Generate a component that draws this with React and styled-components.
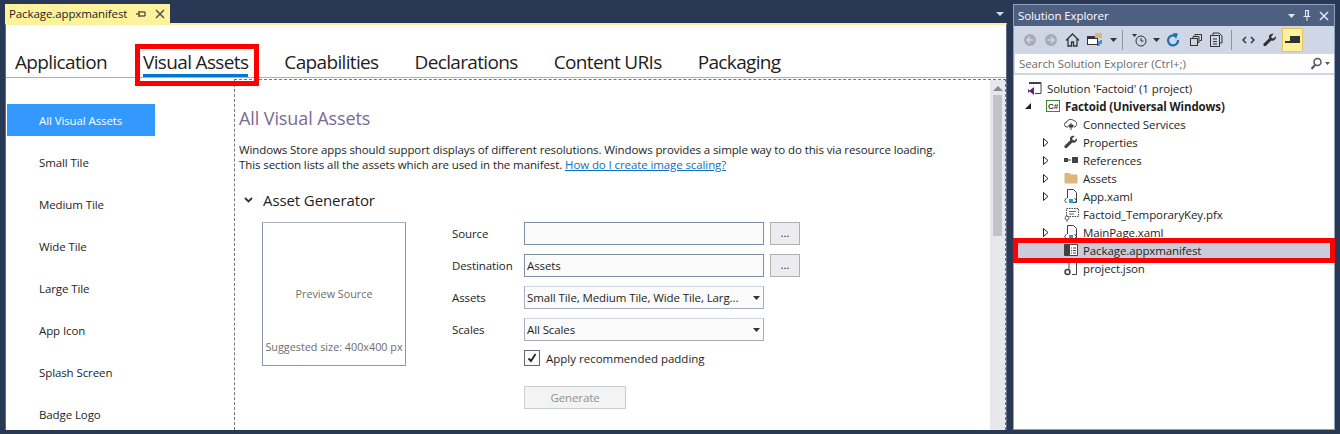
import React from "react";
import styled, { createGlobalStyle } from "styled-components";

const Global = createGlobalStyle`
  html, body { margin: 0; padding: 0; overflow: hidden; }
  * { box-sizing: border-box; }
  body { font-family: "Open Sans", "Noto Sans", sans-serif; font-size: 11.5px; letter-spacing: -0.1px; color: #1e1e1e; }
`;

const Page = styled.div`
  width: 1340px;
  height: 434px;
  background: #293955;
  display: flex;
  padding: 4px 5px 4px 5px;
  position: relative;
  overflow: hidden;
`;

const DocArea = styled.div`
  width: 1002px;
  display: flex;
  flex-direction: column;
`;

const DocTabStrip = styled.div`
  height: 19px;
  display: flex;
  justify-content: space-between;
  align-items: center;
`;

const DocTab = styled.div`
  width: 165px;
  height: 19px;
  background: #fff29d;
  display: flex;
  align-items: center;
  padding-left: 4px;
  color: #1e1e1e;
`;

const DocTabIcons = styled.div`
  margin-left: auto;
  margin-right: 5px;
  display: flex;
  align-items: center;
  gap: 9px;
`;

const StripArrow = styled.div`
  width: 0;
  height: 0;
  margin-right: 3px;
  border-left: 4px solid transparent;
  border-right: 4px solid transparent;
  border-top: 4px solid #cfd6e5;
`;

const Doc = styled.div`
  flex: 1;
  min-height: 0;
  background: #fff;
  border-top: 2px solid #fff29d;
  border-left: 1px solid #5d6b87;
  border-right: 1px solid #5d6b87;
  display: flex;
  flex-direction: column;
`;

const TabRow = styled.div`
  height: 53px;
  flex: none;
  display: flex;
  align-items: flex-start;
  padding: 25px 0 0 9px;
  gap: 36px;
  border-bottom: 1px solid #b0b0b0;
`;

const Tab = styled.div`
  font-size: 19px;
  line-height: 24px;
  color: #1e1e1e;
  letter-spacing: -0.65px;
  border-bottom: 3px solid ${(p) => (p.$active ? "#0078d7" : "transparent")};
`;

const Body = styled.div`
  flex: 1;
  min-height: 0;
  display: flex;
`;

const Nav = styled.div`
  width: 228px;
  flex: none;
  padding: 26px 0 0 1px;
  display: flex;
  flex-direction: column;
  gap: 10px;
`;

const NavItem = styled.div`
  width: 148px;
  height: 32px;
  flex: none;
  display: flex;
  align-items: center;
  padding-left: 32px;
  background: ${(p) => (p.$active ? "#3399ff" : "transparent")};
  color: ${(p) => (p.$active ? "#fff" : "#1e1e1e")};
`;

const Main = styled.div`
  flex: 1;
  min-width: 0;
  margin-top: 1px;
  border-top: 1px dashed #777;
  border-left: 1px dashed #777;
  border-right: 1px dashed #777;
  display: flex;
`;

const Content = styled.div`
  flex: 1;
  min-width: 0;
  padding: 26px 0 0 4px;
`;

const Heading = styled.div`
  font-size: 18px;
  line-height: 24px;
  color: #7a6a96;
`;

const Para = styled.p`
  margin: 12px 0 0;
  line-height: 15px;
  white-space: nowrap;
`;

const Link = styled.a`
  color: #0e70c0;
  text-decoration: underline;
`;

const SectionHead = styled.div`
  margin-top: 18px;
  display: flex;
  align-items: center;
  font-size: 15px;
  line-height: 20px;
  gap: 10px;
  padding-left: 5px;
`;

const Generator = styled.div`
  display: flex;
  margin: 12px 0 0 23px;
`;

const Preview = styled.div`
  width: 144px;
  height: 144px;
  flex: none;
  border: 1px solid #8a99ad;
  border-top-color: #a8b3c2;
  color: #6d6d6d;
  font-size: 10.8px;
  letter-spacing: 0;
  display: flex;
  flex-direction: column;
  align-items: center;
  padding-top: 63px;
`;

const PreviewHint = styled.div`
  margin-top: 38px;
  white-space: nowrap;
`;

const Form = styled.div`
  margin-left: 46px;
  display: grid;
  grid-template-columns: 72px 240px 36px;
  row-gap: 9px;
  grid-auto-rows: 23px;
`;

const Label = styled.div`
  display: flex;
  align-items: center;
`;

const Field = styled.div`
  border: 1px solid #7f8ea3;
  background: #fbfbfb;
  display: flex;
  align-items: center;
  justify-content: space-between;
  padding: 0 3px 0 2px;
  white-space: nowrap;
  ${(p) => p.$select && "border-color: #a3afbf; border-top-color: #ccd4de;"}
`;

const DotsButton = styled.div`
  margin-left: 6px;
  border: 1px solid #b0b0b0;
  background: #ececf0;
  display: flex;
  justify-content: center;
  align-items: center;
  color: #1e1e1e;
  padding-bottom: 2px;
`;

const CheckRow = styled.div`
  grid-column: 2 / 4;
  display: flex;
  align-items: center;
  gap: 6px;
  height: 16px;
  letter-spacing: 0;
`;

const CheckBox = styled.div`
  width: 16px;
  height: 16px;
  border: 1px solid #666;
  background: #fafafa;
  display: flex;
  align-items: center;
  justify-content: center;
`;

const GenerateButton = styled.div`
  grid-column: 2 / 3;
  width: 102px;
  height: 23px;
  margin-top: 4px;
  border: 1px solid #ccced6;
  background: #f3f3f3;
  color: #8f8f8f;
  display: flex;
  align-items: center;
  justify-content: center;
`;

const ScrollBar = styled.div`
  width: 15px;
  flex: none;
  background: #e8e8ec;
  display: flex;
  flex-direction: column;
  align-items: center;
  padding-top: 6px;
`;

const ScrollUp = styled.div`
  width: 0;
  height: 0;
  border-left: 5px solid transparent;
  border-right: 5px solid transparent;
  border-bottom: 5px solid #868999;
`;

const ScrollThumb = styled.div`
  width: 9px;
  height: 141px;
  margin-top: 4px;
  background: #c2c3c9;
`;

const Explorer = styled.div`
  margin-left: 6px;
  width: 322px;
  border: 1px solid #8fa0bd;
  display: flex;
  flex-direction: column;
  background: #fff;
`;

const TitleBar = styled.div`
  height: 21px;
  flex: none;
  background: #4d6082;
  color: #fff;
  display: flex;
  align-items: center;
  justify-content: space-between;
  padding: 0 5px 0 4px;
`;

const TitleIcons = styled.div`
  display: flex;
  align-items: center;
  gap: 7px;
`;

const Toolbar = styled.div`
  height: 27px;
  flex: none;
  background: #cfd6e5;
  display: flex;
  align-items: center;
  padding-left: 5px;
`;

const ToolIcon = styled.div`
  width: ${(p) => p.$w || 21}px;
  height: 24px;
  display: flex;
  align-items: center;
  justify-content: center;
  flex: none;
`;

const ToolSep = styled.div`
  width: 1px;
  height: 20px;
  background: #8c96a8;
  margin: 0 6px 0 3px;
  flex: none;
`;

const ToolActive = styled(ToolIcon)`
  background: #fff29d;
  border: 1px solid #e5c365;
  margin-left: 2px;
`;

const SearchWrap = styled.div`
  flex: none;
  background: #cfd6e5;
  padding: 1px 0 2px 1px;
`;

const Search = styled.div`
  height: 19px;
  background: #fff;
  color: #6d6d6d;
  display: flex;
  align-items: center;
  justify-content: space-between;
  padding: 0 4px;
`;

const Tree = styled.div`
  flex: 1;
  padding-top: 4px;
`;

const Row = styled.div`
  height: 18px;
  display: flex;
  align-items: center;
  padding-left: ${(p) => p.$indent}px;
  background: ${(p) => (p.$selected ? "#cacdd9" : "transparent")};
  font-weight: ${(p) => (p.$bold ? 700 : 400)};
  white-space: nowrap;
`;

const Expander = styled.div`
  width: 18px;
  flex: none;
  display: flex;
  align-items: center;
`;

const RowIcon = styled.div`
  width: 20px;
  height: 16px;
  flex: none;
  margin-right: 2px;
  display: flex;
  align-items: center;
  justify-content: center;
`;

// red callouts drawn on top of the screenshot
const Callout = styled.div`
  position: absolute;
  border: 5px solid #f00;
  pointer-events: none;
  left: ${(p) => p.$x}px;
  top: ${(p) => p.$y}px;
  width: ${(p) => p.$w}px;
  height: ${(p) => p.$h}px;
`;

const Svg = ({ w = 16, h = 16, children }) => (
  <svg width={w} height={h} viewBox={`0 0 ${w} ${h}`}>{children}</svg>
);

const Pin = ({ c = "#1e1e1e" }) => (
  <Svg w={10} h={10}>
    <path d="M0 5h3M3 2v6M3 3h6M3 7h6M9 3v4" stroke={c} fill="none" />
  </Svg>
);

const PinUp = ({ c = "#e6eaf2" }) => (
  <Svg w={10} h={11}>
    <path d="M3 .5h4M3.500 .5v5.500M6.500 .5v5.500M1.500 6.500h7M5 7v4" stroke={c} fill="none" />
    <rect x="5.500" y="1" width="1.500" height="5" fill={c} />
  </Svg>
);

const Close = ({ c = "#555" }) => (
  <Svg w={10} h={10}>
    <path d="M1 1l8 8M9 1l-8 8" stroke={c} strokeWidth="1.600" fill="none" />
  </Svg>
);

const Caret = ({ c = "#333" }) => (
  <Svg w={7} h={4}>
    <path d="M0 0h7L3.500 4z" fill={c} />
  </Svg>
);

const Round = ({ dir }) => (
  <Svg w={14} h={14}>
    <circle cx="7" cy="7" r="6" fill="#a6abb5" />
    <path d={dir === "l" ? "M10.500 7h-6M7 4L4 7l3 3" : "M3.500 7h6M7 4l3 3-3 3"} stroke="#cfd6e5" strokeWidth="1.600" fill="none" />
  </Svg>
);

const Wrench = ({ c = "#424242" }) => (
  <Svg w={14} h={14}>
    <path d="M13 3.200L10.400 5.600 8.600 5 8.200 3.400 10.600 1C8.500 .2 6 1.400 5.900 3.800c0 .6.1 1.100.3 1.500L.8 10.600c-.6.7-.6 1.600 0 2.200.6.6 1.500.6 2.200 0l5.300-5.300c2.600.9 5.300-1.400 4.700-4.300z" fill={c} />
  </Svg>
);

const FileIcon = ({ children }) => (
  <Svg w={14} h={16}>
    <path d="M3.500 1.500h6l3 3v10h-9z" fill="#fff" stroke="#424242" />
    {children}
  </Svg>
);

const Xaml = () => (
  <FileIcon>
    <rect x="3" y="10" width="6" height="5" fill="#fff" />
    <rect x="5" y="11" width="4" height="4" fill="#1ba1e2" />
    <path d="M2.500 10L.5 12.500 2.500 15M10.500 10l2 2.500-2 2.500" stroke="#424242" fill="none" />
  </FileIcon>
);

const tree = [
  { label: "Solution 'Factoid' (1 project)", indent: 11, icon: (
    <Svg w={14} h={14}>
      <path d="M2 1.500h11v11H7" stroke="#424242" fill="none" />
      <path d="M1 2h12" stroke="#424242" strokeWidth="2" />
      <path d="M0 8l1.500 1.500L6 6v8l-4.500-3.500L0 12z" fill="#68217a" />
    </Svg>
  ) },
  { label: "Factoid (Universal Windows)", indent: 11, bold: true, exp: "open", icon: (
    <Svg w={14} h={12}>
      <rect x="0.500" y="0.500" width="13" height="11" fill="#fff" stroke="#388a34" />
      <text x="7" y="9" fontSize="8" textAnchor="middle" fontFamily="Liberation Sans" fontWeight="700" fill="#333">C#</text>
    </Svg>
  ) },
  { label: "Connected Services", indent: 47, icon: (
    <Svg w={14} h={14}>
      <path d="M4 10H3a2.500 2.500 0 0 1 0-5c.5-3 5.500-3.500 7-1 2.500-.5 4 3.500 1 6h-1" stroke="#424242" fill="none" />
      <path d="M7 6v7M5 8h4v2H5z" stroke="#424242" fill="#424242" />
    </Svg>
  ) },
  { label: "Properties", indent: 29, exp: "shut", icon: <Wrench /> },
  { label: "References", indent: 29, exp: "shut", icon: (
    <Svg w={14} h={8}>
      <rect x="0" y="2" width="4" height="4" fill="#424242" />
      <path d="M4 4h3" stroke="#424242" />
      <rect x="8" y="1" width="6" height="6" fill="#424242" />
    </Svg>
  ) },
  { label: "Assets", indent: 29, exp: "shut", icon: (
    <Svg w={14} h={12}>
      <path d="M.5 1h5l1 1.500h7v9h-13z" fill="#dcb67a" />
    </Svg>
  ) },
  { label: "App.xaml", indent: 29, exp: "shut", icon: <Xaml /> },
  { label: "Factoid_TemporaryKey.pfx", indent: 47, icon: (
    <Svg w={15} h={15}>
      <rect x="2.500" y="1.500" width="12" height="8" fill="#fff" stroke="#424242" strokeDasharray="1.500 1" />
      <path d="M5 4.500h7M5 7h5" stroke="#666" />
      <circle cx="3" cy="11" r="2" fill="none" stroke="#666" />
      <path d="M3 13v2" stroke="#666" />
    </Svg>
  ) },
  { label: "MainPage.xaml", indent: 29, exp: "shut", icon: <Xaml /> },
  { label: "Package.appxmanifest", indent: 47, selected: true, icon: (
    <Svg w={14} h={14}>
      <path d="M.5 1.500h5v11h-5z" fill="#424242" stroke="#424242" />
      <path d="M5.500 1.500h8v11h-8z" fill="#fff" stroke="#424242" />
      <path d="M7 5h1M9 5h3M7 7.500h1M9 7.500h3M7 10h1M9 10h3" stroke="#424242" />
    </Svg>
  ) },
  { label: "project.json", indent: 47, icon: (
    <Svg w={14} h={16}>
      <path d="M5 1.500h6l1.500 1.500v11.500H8" fill="none" stroke="#424242" />
      <path d="M5 1.500v8" stroke="#424242" />
      <circle cx="3.500" cy="12" r="2.500" fill="none" stroke="#424242" strokeWidth="1.500" />
    </Svg>
  ) },
];

const navItems = ["All Visual Assets", "Small Tile", "Medium Tile", "Wide Tile", "Large Tile", "App Icon", "Splash Screen", "Badge Logo"];
const tabs = ["Application", "Visual Assets", "Capabilities", "Declarations", "Content URIs", "Packaging"];

export default function App() {
  return (
    <Page>
      <Global />
      <DocArea>
        <DocTabStrip>
          <DocTab>
            Package.appxmanifest
            <DocTabIcons><Pin /><Close /></DocTabIcons>
          </DocTab>
          <StripArrow />
        </DocTabStrip>
        <Doc>
          <TabRow>
            {tabs.map((t) => <Tab key={t} $active={t === "Visual Assets"}>{t}</Tab>)}
          </TabRow>
          <Body>
            <Nav>
              {navItems.map((n, i) => <NavItem key={n} $active={i === 0}>{n}</NavItem>)}
            </Nav>
            <Main>
              <Content>
                <Heading>All Visual Assets</Heading>
                <Para>
                  Windows Store apps should support displays of different resolutions. Windows provides a simple way to do this via resource loading.
                  <br />
                  This section lists all the assets which are used in the manifest. <Link>How do I create image scaling?</Link>
                </Para>
                <SectionHead>
                  <Svg w={9} h={6}><path d="M1 1l3.500 3.500L8 1" stroke="#333" strokeWidth="1.800" fill="none" /></Svg>
                  Asset Generator
                </SectionHead>
                <Generator>
                  <Preview>
                    Preview Source
                    <PreviewHint>Suggested size: 400x400 px</PreviewHint>
                  </Preview>
                  <Form>
                    <Label>Source</Label>
                    <Field />
                    <DotsButton>...</DotsButton>
                    <Label>Destination</Label>
                    <Field>Assets</Field>
                    <DotsButton>...</DotsButton>
                    <Label>Assets</Label>
                    <Field $select>Small Tile, Medium Tile, Wide Tile, Larg...<Caret /></Field>
                    <div />
                    <Label>Scales</Label>
                    <Field $select>All Scales<Caret /></Field>
                    <div />
                    <div />
                    <CheckRow>
                      <CheckBox>
                        <Svg w={10} h={10}><path d="M1.500 5.500l2.500 2.500 4.500-7" stroke="#222" strokeWidth="1.800" fill="none" /></Svg>
                      </CheckBox>
                      Apply recommended padding
                    </CheckRow>
                    <div />
                    <GenerateButton>Generate</GenerateButton>
                  </Form>
                </Generator>
              </Content>
              <ScrollBar>
                <ScrollUp />
                <ScrollThumb />
              </ScrollBar>
            </Main>
          </Body>
        </Doc>
      </DocArea>
      <Explorer>
        <TitleBar>
          Solution Explorer
          <TitleIcons>
            <Caret c="#dfe4ee" />
            <PinUp />
            <Close c="#dfe4ee" />
          </TitleIcons>
        </TitleBar>
        <Toolbar>
          <ToolIcon><Round dir="l" /></ToolIcon>
          <ToolIcon><Round dir="r" /></ToolIcon>
          <ToolIcon $w={22}>
            <Svg w={15} h={14}><path d="M1 7.500L7.500 1 14 7.500M3 6v7h3.500V9h2v4H12V6" stroke="#333" strokeWidth="1.300" fill="none" /></Svg>
          </ToolIcon>
          <ToolIcon $w={24}>
            <Svg w={16} h={15}>
              <rect x="0.500" y="6.500" width="10" height="6" fill="#fff" stroke="#333" />
              <rect x="0" y="4" width="11" height="3" fill="#333" />
              <path d="M8 1h7v5H8z" fill="#dcb67a" />
              <path d="M12 9v4h-2M14 8v4" stroke="#1b6fb5" strokeWidth="1.300" fill="none" />
            </Svg>
          </ToolIcon>
          <ToolIcon $w={12}><Caret /></ToolIcon>
          <ToolSep />
          <ToolIcon $w={22}>
            <Svg w={16} h={14}>
              <path d="M0 1h5L2.500 4z" fill="#333" />
              <circle cx="9" cy="8" r="5" fill="none" stroke="#333" />
              <path d="M9 5v3h2.500" stroke="#333" fill="none" />
            </Svg>
          </ToolIcon>
          <ToolIcon $w={10}><Caret /></ToolIcon>
          <ToolIcon $w={24}>
            <Svg w={14} h={14}>
              <path d="M9.500 3.100A5 5 0 1 0 12 7" stroke="#1b6fb5" strokeWidth="2.200" fill="none" />
              <path d="M7 0l5 .5L10 6z" fill="#1b6fb5" />
            </Svg>
          </ToolIcon>
          <ToolIcon $w={21}>
            <Svg w={12} h={12}>
              <rect x="0.500" y="4.500" width="7" height="7" fill="none" stroke="#333" />
              <path d="M3 4.500V2.500h6v6H8M5 2.500V.5h6.500v6H9.500" stroke="#333" fill="none" />
            </Svg>
          </ToolIcon>
          <ToolIcon $w={22}>
            <Svg w={14} h={15}>
              <path d="M3 3V1h6l3 3v7h-2" stroke="#333" fill="none" />
              <rect x="0.500" y="3.500" width="9" height="11" fill="#cfd6e5" stroke="#333" />
              <path d="M3 7h4M3 9.500h4M3 12h4" stroke="#333" />
            </Svg>
          </ToolIcon>
          <ToolSep />
          <ToolIcon $w={21}>
            <Svg w={13} h={8}><path d="M4 1L1 4l3 3M9 1l3 3-3 3" stroke="#333" strokeWidth="1.500" fill="none" /></Svg>
          </ToolIcon>
          <ToolIcon $w={21}><Wrench c="#333" /></ToolIcon>
          <ToolActive $w={21}>
            <Svg w={15} h={8}>
              <rect x="5" y="0" width="10" height="5" fill="#333" />
              <rect x="0" y="5" width="15" height="2" fill="#333" />
            </Svg>
          </ToolActive>
        </Toolbar>
        <SearchWrap>
          <Search>
            Search Solution Explorer (Ctrl+;)
            <Svg w={20} h={13}>
              <circle cx="7.500" cy="5" r="3.500" fill="none" stroke="#555" strokeWidth="1.500" />
              <path d="M5 8l-3.500 4" stroke="#555" strokeWidth="2" />
              <path d="M15 5h5l-2.500 3z" fill="#555" />
            </Svg>
          </Search>
        </SearchWrap>
        <Tree>
          {tree.map((r) => (
            <Row key={r.label} $indent={r.indent} $bold={r.bold} $selected={r.selected}>
              {r.exp && (
                <Expander>
                  {r.exp === "open"
                    ? <Svg w={7} h={7}><path d="M6 0v6H0z" fill="#222" /></Svg>
                    : <Svg w={6} h={9}><path d="M.5.500l4.500 4-4.500 4z" fill="#fff" stroke="#222" /></Svg>}
                </Expander>
              )}
              <RowIcon>{r.icon}</RowIcon>
              {r.label}
            </Row>
          ))}
        </Tree>
      </Explorer>
      <Callout $x={135} $y={44} $w={124} $h={42} />
      <Callout $x={1013} $y={238} $w={322} $h={25} />
    </Page>
  );
}
